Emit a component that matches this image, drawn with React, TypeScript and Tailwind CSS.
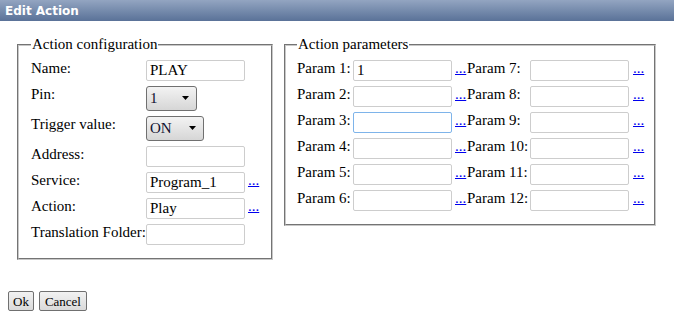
import React from 'react';

const Dots = ({ className = '' }: { className?: string }) => (
    <a href="#" className={`text-[#0000ee] underline leading-[17px] ${className}`}>...</a>
);

const TextBox = ({ value = '', focused = false, className = '' }: { value?: string; focused?: boolean; className?: string }) => (
    <input
        type="text"
        defaultValue={value}
        className={`w-[99px] h-[21px] px-[3px] bg-white border rounded-[2px] outline-none text-[15px] text-black ${focused ? 'border-[#7eb4ea]' : 'border-[#cdcdcd]'} ${className}`}
    />
);

const DropDown = ({ value, width }: { value: string; width: string }) => (
    <div className={`relative h-[25px] ${width}`}>
        <select
            defaultValue={value}
            className="appearance-none w-full h-full pl-[3px] pr-[16px] border border-[#707070] rounded-[3px] bg-gradient-to-b from-[#f3f3f3] to-[#d6d6d6] text-[15px] text-[#101030] outline-none"
        >
            <option>{value}</option>
        </select>
        <svg className="absolute right-[8px] top-[10px] pointer-events-none" width="7" height="4" viewBox="0 0 7 4">
            <path d="M0 0 L7 0 L3.5 4 Z" fill="#000" />
        </svg>
    </div>
);

const ConfigRow = ({ label, h, children }: { label: string; h: string; children: React.ReactNode }) => (
    <div className={`flex items-start ${h}`}>
        <span className="w-[115px] leading-[17px] whitespace-nowrap">{label}</span>
        {children}
    </div>
);

const ParamRow = ({ left, right, value = '', focused = false }: { left: number; right: number; value?: string; focused?: boolean }) => (
    <div className="flex items-start h-[26px]">
        <span className="w-[56px] leading-[17px] whitespace-nowrap">Param {left}:</span>
        <TextBox value={value} focused={focused} />
        <Dots className="ml-[3px] w-[12px]" />
        <span className="w-[63px] leading-[17px] whitespace-nowrap">Param {right}:</span>
        <TextBox />
        <Dots className="ml-[4px]" />
    </div>
);

export default function App() {
    return (
        <div className="w-[674px] h-[316px] bg-white text-black text-[15px] font-['Liberation_Serif',serif] overflow-hidden">
            <div className="h-[21px] flex items-center pl-[5px] bg-gradient-to-b from-[#93a5c1] to-[#5a7298] text-white font-bold text-[12px] font-['DejaVu_Sans',sans-serif]">
                Edit Action
            </div>

            <div className="flex items-start gap-[11px] pl-[17px] mt-[15px]">
                <fieldset className="w-[256px] border-2 [border-style:groove] border-[#c8c8c8] pl-[12px] pt-[7px] pb-[8px]">
                    <legend className="px-[1px] leading-[17px]">Action configuration</legend>
                    <ConfigRow label="Name:" h="h-[26px]">
                        <TextBox value="PLAY" />
                    </ConfigRow>
                    <ConfigRow label="Pin:" h="h-[30px]">
                        <DropDown value="1" width="w-[51px]" />
                    </ConfigRow>
                    <ConfigRow label="Trigger value:" h="h-[30px]">
                        <DropDown value="ON" width="w-[58px]" />
                    </ConfigRow>
                    <ConfigRow label="Address:" h="h-[26px]">
                        <TextBox />
                    </ConfigRow>
                    <ConfigRow label="Service:" h="h-[26px]">
                        <TextBox value="Program_1" />
                        <Dots className="ml-[3px]" />
                    </ConfigRow>
                    <ConfigRow label="Action:" h="h-[26px]">
                        <TextBox value="Play" />
                        <Dots className="ml-[3px]" />
                    </ConfigRow>
                    <ConfigRow label="Translation Folder:" h="h-[26px]">
                        <TextBox />
                    </ConfigRow>
                </fieldset>

                <fieldset className="w-[372px] border-2 [border-style:groove] border-[#c8c8c8] pl-[11px] pt-[7px] pb-[8px]">
                    <legend className="px-[1px] leading-[17px]">Action parameters</legend>
                    <ParamRow left={1} right={7} value="1" />
                    <ParamRow left={2} right={8} />
                    <ParamRow left={3} right={9} focused />
                    <ParamRow left={4} right={10} />
                    <ParamRow left={5} right={11} />
                    <ParamRow left={6} right={12} />
                </fieldset>
            </div>

            <div className="flex gap-[5px] ml-[8px] mt-[31px]">
                <button className="h-[20px] px-[4px] border border-[#707070] rounded-[2px] bg-gradient-to-b from-[#f2f2f2] to-[#dadada] text-[13px] leading-none">Ok</button>
                <button className="h-[20px] px-[5px] border border-[#707070] rounded-[2px] bg-gradient-to-b from-[#f2f2f2] to-[#dadada] text-[13px] leading-none">Cancel</button>
            </div>
        </div>
    );
}
